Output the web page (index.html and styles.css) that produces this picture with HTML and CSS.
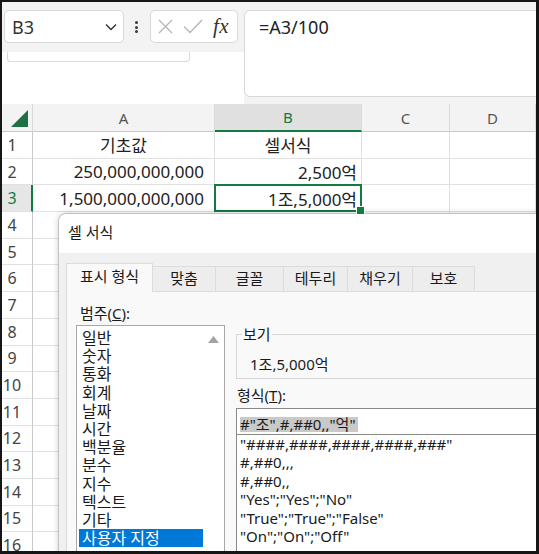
FILE: index.html
```html
<!doctype html>
<html lang="ko">
<head>
    <meta charset="UTF-8">
    <meta name="viewport" content="width=device-width, initial-scale=1.0">
    <title>셀 서식</title>
    <link rel="stylesheet" href="styles.css">
</head>
<body>
<div class="frame">
    <!-- 수식 입력줄 -->
    <div class="toolbar">
        <div class="tb-left">
            <div class="tb-row">
                <div class="namebox">
                    <span>B3</span>
                    <svg width="12" height="8" viewBox="0 0 12 8"><path d="M1 1.5 L6 6.5 L11 1.5" fill="none" stroke="#333" stroke-width="1.4"/></svg>
                </div>
                <div class="vdots"><i></i><i></i><i></i></div>
                <div class="fxbox">
                    <svg width="15" height="15" viewBox="0 0 15 15"><path d="M1 1 L14 14 M14 1 L1 14" stroke="#b5b5b5" stroke-width="1.3"/></svg>
                    <svg width="20" height="15" viewBox="0 0 20 15"><path d="M1 7.5 L7 13.5 L19 1" fill="none" stroke="#b5b5b5" stroke-width="1.3"/></svg>
                    <span class="fx">fx</span>
                </div>
            </div>
            <div class="tb-under"><div class="ghost"></div></div>
        </div>
        <div class="tb-right">
            <div class="formula">=A3/100</div>
        </div>
    </div>

    <!-- 워크시트 -->
    <div class="sheet">
        <div class="hd corner"><svg width="17" height="17" viewBox="0 0 17 17"><polygon points="17,0 17,17 0,17" fill="#1e7145"/></svg></div>
        <div class="hd">A</div>
        <div class="hd on">B</div>
        <div class="hd">C</div>
        <div class="hd">D</div>

        <div class="rh">1</div><div class="c mid">기초값</div><div class="c mid">셀서식</div><div class="c"></div><div class="c"></div>
        <div class="rh">2</div><div class="c num">250,000,000,000</div><div class="c num b">2,500억</div><div class="c"></div><div class="c"></div>
        <div class="rh on">3</div><div class="c num">1,500,000,000,000</div><div class="c num b active">1조,5,000억</div><div class="c"></div><div class="c"></div>
        <div class="rh">4</div><div class="c"></div><div class="c"></div><div class="c"></div><div class="c"></div>
        <div class="rh">5</div><div class="c"></div><div class="c"></div><div class="c"></div><div class="c"></div>
        <div class="rh">6</div><div class="c"></div><div class="c"></div><div class="c"></div><div class="c"></div>
        <div class="rh">7</div><div class="c"></div><div class="c"></div><div class="c"></div><div class="c"></div>
        <div class="rh">8</div><div class="c"></div><div class="c"></div><div class="c"></div><div class="c"></div>
        <div class="rh">9</div><div class="c"></div><div class="c"></div><div class="c"></div><div class="c"></div>
        <div class="rh">10</div><div class="c"></div><div class="c"></div><div class="c"></div><div class="c"></div>
        <div class="rh">11</div><div class="c"></div><div class="c"></div><div class="c"></div><div class="c"></div>
        <div class="rh">12</div><div class="c"></div><div class="c"></div><div class="c"></div><div class="c"></div>
        <div class="rh">13</div><div class="c"></div><div class="c"></div><div class="c"></div><div class="c"></div>
        <div class="rh">14</div><div class="c"></div><div class="c"></div><div class="c"></div><div class="c"></div>
        <div class="rh">15</div><div class="c"></div><div class="c"></div><div class="c"></div><div class="c"></div>
        <div class="rh">16</div><div class="c"></div><div class="c"></div><div class="c"></div><div class="c"></div>
    </div>

    <!-- 셀 서식 대화상자 -->
    <div class="dialog">
        <div class="dlg-title">셀 서식</div>
        <div class="dlg-body">
            <div class="tabs">
                <div class="tab active w1">표시 형식</div>
                <div class="tab w2">맞춤</div>
                <div class="tab w3">글꼴</div>
                <div class="tab w4">테두리</div>
                <div class="tab w5">채우기</div>
                <div class="tab w6">보호</div>
            </div>
            <div class="pane">
                <div class="cat">
                    <div class="label">범주(<u>C</u>):</div>
                    <div class="catlist">
                        <ul>
                            <li>일반</li>
                            <li>숫자</li>
                            <li>통화</li>
                            <li>회계</li>
                            <li>날짜</li>
                            <li>시간</li>
                            <li>백분율</li>
                            <li>분수</li>
                            <li>지수</li>
                            <li>텍스트</li>
                            <li>기타</li>
                            <li class="sel">사용자 지정</li>
                        </ul>
                        <div class="scroll">
                            <svg width="11" height="7" viewBox="0 0 11 7"><polygon points="5.5,0 11,7 0,7" fill="#a3a3a3"/></svg>
                        </div>
                    </div>
                </div>
                <div class="fmt">
                    <fieldset class="sample">
                        <legend>보기</legend>
                        <div class="sample-val">1조,5,000억</div>
                    </fieldset>
                    <div class="label fmt-label">형식(<u>T</u>):</div>
                    <div class="fmt-input"><span class="hl">#"조",#,##0,,"억"</span></div>
                    <ul class="fmt-list">
                        <li>"####,####,####,####,###"</li>
                        <li>#,##0,,,</li>
                        <li>#,##0,,</li>
                        <li>"Yes";"Yes";"No"</li>
                        <li>"True";"True";"False"</li>
                        <li>"On";"On";"Off"</li>
                    </ul>
                </div>
            </div>
        </div>
    </div>
</div>
</body>
</html>
```

FILE: styles.css
```css
* {
    box-sizing: border-box;
}
body {
    margin: 0;
    background: #fff;
    font-family: "Noto Sans", "Noto Sans CJK KR", sans-serif;
    color: #1f1f1f;
}
.frame {
    position: relative;
    width: 539px;
    height: 554px;
    border: 2px solid #161616;
    border-right-width: 3px;
    border-bottom-width: 3px;
    overflow: hidden;
    background: #fff;
}

/* toolbar */
.toolbar {
    display: flex;
    height: 102px;
}
.tb-left {
    width: 242px;
    display: flex;
    flex-direction: column;
}
.tb-row {
    height: 50px;
    background: #f3f3f3;
    display: flex;
    align-items: flex-start;
    padding: 8px 0 0 2px;
}
.namebox {
    width: 120px;
    height: 33px;
    background: #fff;
    border: 1px solid #d8d8d8;
    border-radius: 5px;
    display: flex;
    align-items: center;
    justify-content: space-between;
    padding: 0 6px 0 7px;
    font-size: 18px;
    color: #333;
}
.vdots {
    display: flex;
    flex-direction: column;
    gap: 1.5px;
    margin: 11px 0 0 11px;
}
.vdots i {
    display: block;
    width: 3px;
    height: 3px;
    border-radius: 50%;
    background: #3a3a3a;
}
.fxbox {
    width: 88px;
    height: 33px;
    margin-left: 12px;
    background: #fff;
    border: 1px solid #d8d8d8;
    border-radius: 5px;
    display: flex;
    align-items: center;
    gap: 10px;
    padding-left: 7px;
}
.fx {
    font-family: "Liberation Serif", serif;
    font-style: italic;
    font-size: 21px;
    color: #333;
    letter-spacing: 0.5px;
}
.tb-under {
    flex: 1;
    background: #fff;
}
.ghost {
    width: 183px;
    height: 10px;
    margin-left: 5px;
    border: 1px solid #dadada;
    border-top: none;
    border-radius: 0 0 4px 4px;
}
.tb-right {
    flex: 1;
    background: #f3f3f3;
    padding-top: 8px;
}
.formula {
    height: 87px;
    margin-right: -10px;
    background: #fff;
    border: 1px solid #d8d8d8;
    border-radius: 6px;
    padding: 4px 0 0 14px;
    font-size: 18px;
    line-height: 24px;
    color: #222;
}

/* sheet */
.sheet {
    display: grid;
    grid-template-columns: 31px 182px 147px 88px 86px;
    grid-template-rows: 28px repeat(16, 26.7px);
}
.hd {
    background: #f3f3f3;
    border-right: 1px solid #dadada;
    border-bottom: 1px solid #c9c9c9;
    display: flex;
    align-items: center;
    justify-content: center;
    font-size: 15px;
    color: #555;
}
.hd.on {
    background: #e0e0e0;
    color: #107c41;
    border-bottom: 2px solid #107c41;
}
.corner {
    align-items: flex-end;
    justify-content: flex-end;
    padding: 0 4px 4px 0;
}
.rh {
    background: #fff;
    border-right: 1px solid #c9c9c9;
    border-bottom: 1px solid #e1e1e1;
    display: flex;
    align-items: center;
    justify-content: center;
    padding-right: 10px;
    font-size: 16px;
    color: #444;
}
.rh.on {
    background: #e6e6e6;
    color: #107c41;
    border-right: 2px solid #107c41;
    padding-right: 9px;
}
.c {
    border-right: 1px solid #e1e1e1;
    border-bottom: 1px solid #e1e1e1;
    display: flex;
    align-items: center;
    font-size: 17px;
    color: #222;
    white-space: nowrap;
}
.c.mid {
    justify-content: center;
}
.c.num {
    justify-content: flex-end;
    padding-right: 10px;
}
.c.num.b {
    padding-right: 4px;
}
.c.active {
    position: relative;
}
.c.active::after {
    content: "";
    position: absolute;
    left: -1px;
    top: -1px;
    right: -1px;
    bottom: -1px;
    border: 2px solid #107c41;
}
.c.active::before {
    content: "";
    position: absolute;
    right: -4px;
    bottom: -4px;
    width: 7px;
    height: 7px;
    background: #107c41;
    border: 1px solid #fff;
    z-index: 1;
}

/* dialog */
.dialog {
    position: absolute;
    left: 56px;
    top: 211px;
    width: 500px;
    height: 420px;
    background: #f0f0f0;
    border: 1px solid #c2c2c2;
    border-radius: 8px 0 0 0;
    box-shadow: 0 0 6px rgba(0, 0, 0, 0.18);
    font-size: 15px;
    color: #1a1a1a;
}
.dlg-title {
    height: 39px;
    background: #fff;
    border-radius: 8px 0 0 0;
    padding-left: 9px;
    line-height: 37px;
}
.dlg-body {
    padding: 10px 0 0 7px;
}
.tabs {
    display: flex;
    align-items: flex-end;
    height: 28px;
}
.tab {
    height: 25px;
    margin-right: -1px;
    border: 1px solid #dcdcdc;
    border-bottom: none;
    background: #ededed;
    text-align: center;
    line-height: 22px;
}
.tab.active {
    height: 29px;
    margin-bottom: -1px;
    background: #f9f9f9;
    line-height: 25px;
    position: relative;
}
.w1 { width: 87px; }
.w2 { width: 64px; }
.w3 { width: 69px; }
.w4 { width: 65px; }
.w5 { width: 66px; }
.w6 { width: 63px; }

.pane {
    display: flex;
    gap: 11px;
    height: 400px;
    background: #f9f9f9;
    border: 1px solid #dcdcdc;
    padding: 11px 0 0 9px;
}
.label {
    line-height: 20px;
    padding-left: 4px;
}
.catlist {
    display: flex;
    width: 149px;
    height: 300px;
    margin-top: 2px;
    background: #fff;
    border: 1px solid #a8a8a8;
}
.catlist ul {
    list-style: none;
    margin: 0;
    padding: 3px 0 0 2px;
    width: 126px;
    font-size: 16px;
}
.catlist li {
    line-height: 18.2px;
    padding-left: 3px;
}
.catlist li.sel {
    background: #0078d7;
    color: #fff;
}
.scroll {
    flex: 1;
    display: flex;
    justify-content: center;
    padding-top: 10px;
}

.fmt {
    width: 320px;
}
.sample {
    margin: 22px 0 0;
    padding: 0 0 0 5px;
    border: 1px solid #d6d6d6;
    min-width: 0;
}
.sample legend {
    padding: 0 1px;
    line-height: 18px;
}
.sample-val {
    margin: 11px 0 4px 8px;
    line-height: 20px;
}
.fmt-label {
    margin-top: 6px;
    padding-left: 1px;
}
.fmt-input {
    height: 27px;
    margin-top: 3px;
    background: #fff;
    border: 1px solid #8a8a8a;
    padding: 5px 0 0 3px;
}
.hl {
    display: inline-block;
    height: 15px;
    line-height: 15px;
    background: #c9c9c9;
    padding-right: 2px;
}
.fmt-list {
    list-style: none;
    margin: -1px 0 0;
    padding: 0 0 0 3px;
    height: 200px;
    background: #fff;
    border: 1px solid #8a8a8a;
}
.fmt-list li {
    line-height: 18.4px;
    white-space: nowrap;
}
```
